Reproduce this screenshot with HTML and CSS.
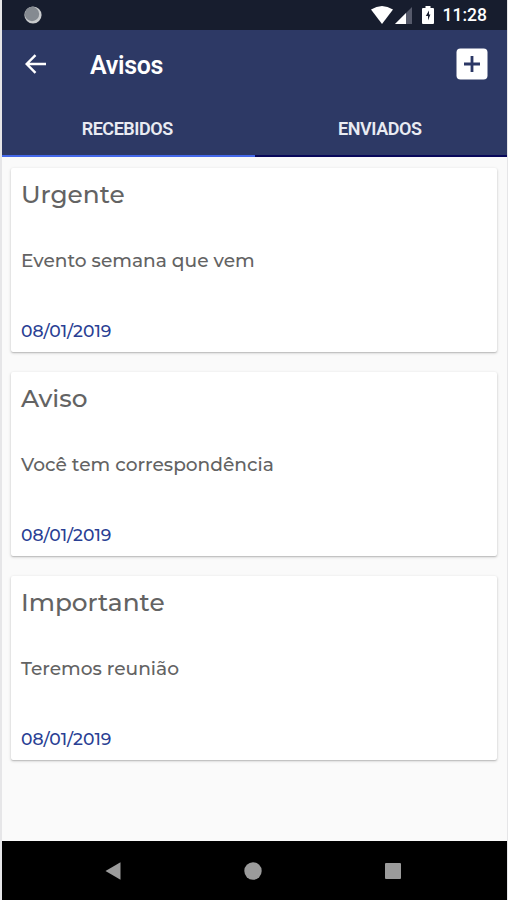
FILE: index.html
```html
<!DOCTYPE html>
<html lang="pt-BR">
  <head>
    <meta charset="UTF-8" />
    <meta name="viewport" content="width=device-width, initial-scale=1.0" />
    <title>Avisos</title>
    <link rel="stylesheet" href="styles.css">
  </head>
  <body>
    <div class="screen">
      <div class="status-bar">
        <svg class="spinner" width="20" height="20" viewBox="0 0 20 20">
          <circle cx="10" cy="10" r="8.6" fill="#c9cbcd" />
          <circle cx="9" cy="9" r="7.2" fill="#858a91" />
        </svg>
        <div class="status-icons">
          <svg class="wifi" width="22" height="18" viewBox="0 0 22 18">
            <path d="M0 3.6Q11-3.6 22 3.6L11 18Z" fill="#fff" />
          </svg>
          <svg class="signal" width="17" height="17" viewBox="0 0 17 17">
            <path d="M17 0v17H0Z" fill="#565a6b" />
            <path d="M11 6v11H0Z" fill="#fff" />
          </svg>
          <svg class="battery" width="12" height="18" viewBox="0 0 12 18">
            <path d="M3.5 0h5v2H11a1 1 0 0 1 1 1v14a1 1 0 0 1-1 1H1a1 1 0 0 1-1-1V3a1 1 0 0 1 1-1h2.500Z" fill="#fff" />
            <path d="M7 4.500 3.800 10h2.200v4.500L8.400 8.500H7Z" fill="#171d2e" />
          </svg>
          <span class="clock">11:28</span>
        </div>
      </div>

      <header class="app-bar">
        <svg class="back" width="22" height="20" viewBox="0 0 22 20">
          <path d="M21 10H2M10.500 1.200 1.700 10l8.800 8.800" fill="none" stroke="#fff" stroke-width="2.400" />
        </svg>
        <h1>Avisos</h1>
        <svg class="add" width="32" height="32" viewBox="0 0 32 32">
          <rect x="0.500" y="0.500" width="31" height="31" rx="4" fill="#fff" />
          <path d="M16 8v16M8 16h16" stroke="#2b3765" stroke-width="2.800" />
        </svg>
      </header>

      <nav class="tabs">
        <div class="tab active">RECEBIDOS</div>
        <div class="tab">ENVIADOS</div>
      </nav>

      <main class="list">
        <div class="card">
          <h2>Urgente</h2>
          <p>Evento semana que vem</p>
          <time>08/01/2019</time>
        </div>
        <div class="card">
          <h2>Aviso</h2>
          <p>Você tem correspondência</p>
          <time>08/01/2019</time>
        </div>
        <div class="card">
          <h2>Importante</h2>
          <p>Teremos reunião</p>
          <time>08/01/2019</time>
        </div>
      </main>

      <footer class="nav-bar">
        <svg width="18" height="18" viewBox="0 0 18 18"><path d="M1.500 9 16.500 0.300v17.400Z" fill="#9b9b9b" /></svg>
        <svg width="18" height="18" viewBox="0 0 18 18"><circle cx="9" cy="9" r="8.700" fill="#9b9b9b" /></svg>
        <svg width="18" height="18" viewBox="0 0 18 18"><rect x="1" y="1" width="16" height="16" rx="1" fill="#9b9b9b" /></svg>
      </footer>
    </div>
  </body>
</html>
```

FILE: styles.css
```css
* {
  box-sizing: border-box;
}
body {
  margin: 0;
  background: #e6e6e8;
  font-family: Roboto, sans-serif;
}
svg {
  display: block;
}
.screen {
  width: 505px;
  height: 900px;
  margin-left: 2px;
  display: flex;
  flex-direction: column;
  background: #fafafa;
}
.status-bar {
  height: 30px;
  padding: 0 20px 0 21px;
  display: flex;
  align-items: center;
  justify-content: space-between;
  background: #171d2e;
}
.status-icons {
  display: flex;
  align-items: center;
}
.signal {
  margin-left: 2px;
}
.battery {
  margin: 0 9px 0 10px;
}
.clock {
  color: #fff;
  font-size: 17.5px;
  font-weight: 500;
  line-height: 30px;
}
.app-bar {
  height: 70px;
  padding: 0 19px 2px 23px;
  display: flex;
  align-items: center;
  background: #2d3965;
}
h1 {
  flex: 1;
  margin: 2px 0 0 43px;
  color: #fff;
  font-size: 25px;
  font-weight: 600;
  letter-spacing: -0.3px;
}
.tabs {
  height: 57px;
  display: flex;
  background: #2d3965;
}
.tab {
  flex: 1;
  padding-right: 2px;
  border-bottom: 2px solid #08085a;
  color: #e9ebf2;
  font-size: 18px;
  font-weight: 600;
  line-height: 58px;
  letter-spacing: -0.45px;
  text-align: center;
}
.tab.active {
  border-bottom-color: #4468ea;
}
.list {
  flex: 1;
  padding: 11px 10px 0 9px;
  display: flex;
  flex-direction: column;
  gap: 20px;
}
.card {
  height: 184px;
  padding: 8px 10px 0;
  display: flex;
  flex-direction: column;
  background: #fff;
  border-radius: 2px;
  box-shadow: 0 1px 3px rgba(0, 0, 0, 0.22), 0 1px 1px rgba(0, 0, 0, 0.1);
  color: #636363;
  font-family: Montserrat, Inter, sans-serif;
  font-weight: 500;
}
.card h2 {
  margin: 0;
  font-size: 24.8px;
  font-weight: 500;
  line-height: 37px;
}
.card p {
  margin: 35px 0 0;
  font-size: 18.6px;
  line-height: 26px;
}
.card time {
  margin-top: 44px;
  color: #2a3f94;
  font-size: 17.2px;
  line-height: 26px;
}
.nav-bar {
  height: 59px;
  padding: 0 105px 0 102px;
  display: flex;
  align-items: center;
  justify-content: space-between;
  background: #000;
}
```
